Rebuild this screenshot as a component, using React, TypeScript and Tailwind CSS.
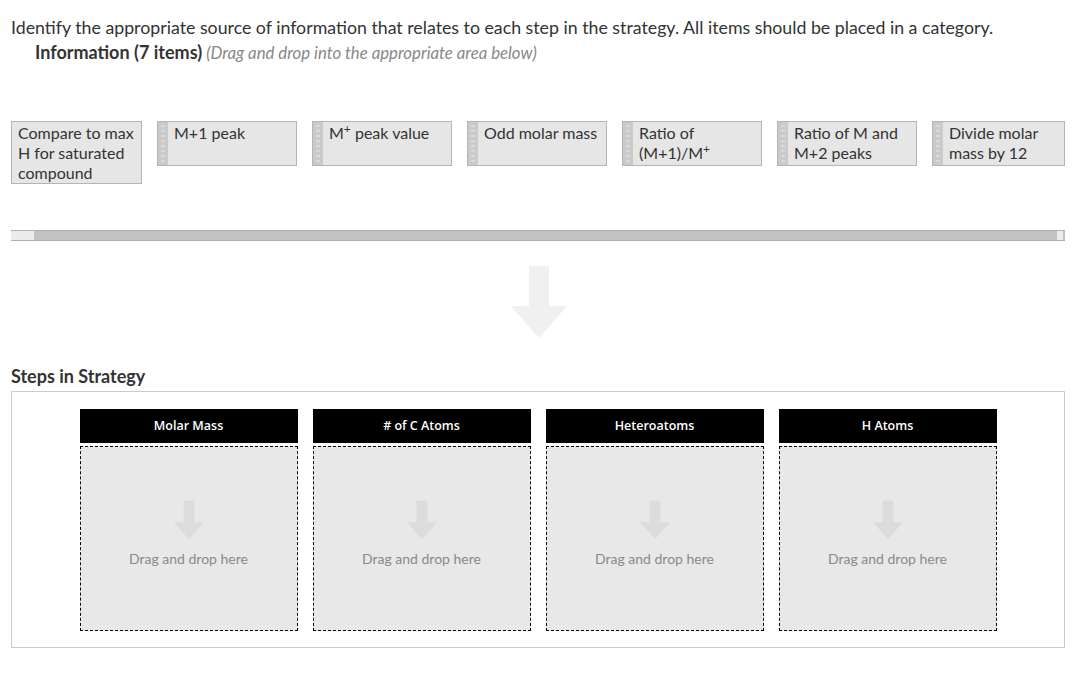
import React from 'react';

const font = { fontFamily: 'Lato, "Open Sans", sans-serif' };

function Grip() {
  return (
    <div className="w-[10px] shrink-0 bg-[#cacaca] flex flex-col items-center justify-start gap-[3px] pt-[3px]">
      {Array.from({ length: 8 }).map((_, i) => (
        <span key={i} className="block w-[4px] h-[2px] bg-[#dadada]" />
      ))}
    </div>
  );
}

function Card({ children, grip = true, wide = 140 }: { children: React.ReactNode; grip?: boolean; wide?: number }) {
  return (
    <div
      className="flex shrink-0 self-start border border-[#b5b5b5] bg-[#e6e6e6] min-h-[45px]"
      style={{ width: wide }}
    >
      {grip && <Grip />}
      <div className="text-[16px] leading-[20px] text-[#333] pt-[1px] pr-1 pl-[6px] whitespace-normal">{children}</div>
    </div>
  );
}

function DownArrow({ w, h, color }: { w: number; h: number; color: string }) {
  return (
    <svg width={w} height={h} viewBox="0 0 56 72">
      <path d="M18 0 H38 V40 H56 L28 72 L0 40 H18 Z" fill={color} />
    </svg>
  );
}

function Column({ title }: { title: string }) {
  return (
    <div className="w-[218px] flex flex-col">
      <div className="h-[34px] bg-black text-white text-[12.5px] font-semibold flex items-center justify-center" style={{ fontFamily: '"Open Sans", Lato, sans-serif' }}>
        {title}
      </div>
      <div className="mt-[3px] h-[185px] border border-dashed border-black bg-[#e8e8e8] flex flex-col items-center pt-[53px]">
        <DownArrow w={30} h={40} color="#dcdcdc" />
        <div className="mt-[8px] text-[14px] text-[#8a8a8a]">Drag and drop here</div>
      </div>
    </div>
  );
}

export default function App() {
  return (
    <div className="w-[1091px] h-[687px] bg-white overflow-hidden" style={font}>
      <div className="pl-[11px] pt-[15px] text-[17.75px] leading-[24px] text-[#333]">
        Identify the appropriate source of information that relates to each step in the strategy. All items should be placed in a category.
      </div>
      <div className="pl-[35px] mt-[1px] h-[24px] leading-[24px] text-[#333]">
        <span className="text-[18px] font-bold">Information (7 items)</span>{' '}
        <span className="text-[16.75px] italic text-[#888]">(Drag and drop into the appropriate area below)</span>
      </div>

      <div className="mt-[57px] ml-[11px] flex gap-[15px] h-[62px]">
        <Card grip={false} wide={131}>Compare to max H for saturated compound</Card>
        <Card>M+1 peak</Card>
        <Card>
          M<sup className="text-[12px]">+</sup> peak value
        </Card>
        <Card>Odd molar mass</Card>
        <Card>
          Ratio of (M+1)/M<sup className="text-[12px]">+</sup>
        </Card>
        <Card>Ratio of M and M+2 peaks</Card>
        <Card wide={133}>Divide molar mass by 12</Card>
      </div>

      <div className="mt-[47px] ml-[11px] w-[1054px] h-[11px] flex bg-[#c2c2c2] border-y border-[#b0b0b0]">
        <div className="w-[23px] h-full bg-[#ececec]" />
        <div className="flex-1" />
        <div className="w-[6px] h-full bg-[#ececec]" />
        <div className="w-[2px]" />
      </div>

      <div className="flex justify-center mt-[25px] pr-[13px]">
        <DownArrow w={56} h={72} color="#f0f0f0" />
      </div>

      <div className="pl-[11px] mt-[26px] h-[24px] text-[18px] font-bold text-[#333] leading-[24px]">Steps in Strategy</div>
      <div className="ml-[11px] mt-[3px] w-[1054px] h-[257px] border border-[#cccccc] flex justify-center gap-[15px] pt-[17px]">
        <Column title="Molar Mass" />
        <Column title="# of C Atoms" />
        <Column title="Heteroatoms" />
        <Column title="H Atoms" />
      </div>
    </div>
  );
}
